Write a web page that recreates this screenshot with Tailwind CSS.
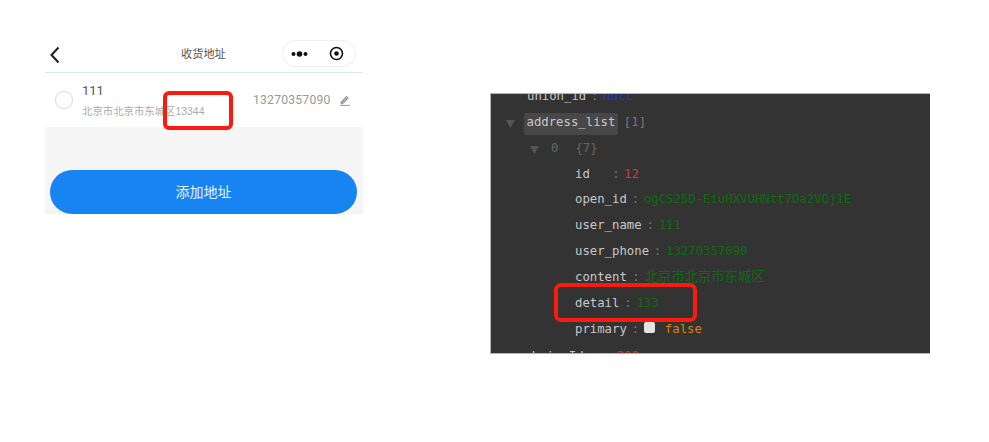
<!DOCTYPE html>
<html>
<head>
<meta charset="utf-8">
<script src="https://cdn.jsdelivr.net/npm/@tailwindcss/browser@4"></script>
</head>
<body class="bg-white">
<div class="relative w-[989px] h-[442px] overflow-hidden bg-white font-['Liberation_Sans','Noto_Sans_CJK_SC',sans-serif]">
  <div class="flex items-start">
    <!-- phone -->
    <section class="ml-[45px] mt-[37px] w-[318px] h-[177px] flex flex-col bg-[#f5f5f5]">
      <header class="h-[36px] shrink-0 bg-white border-b border-[#d5e8f5] flex items-center relative">
        <svg class="ml-[4px] w-[12px] h-[18px]" viewBox="0 0 12 18" fill="none"><path d="M9.5 1.5 L2.5 9 L9.5 16.5" stroke="#222" stroke-width="2.1"/></svg>
        <h1 class="absolute left-[136px] top-[9px] text-[11.2px] leading-[16px] text-[#555]">收货地址</h1>
        <div class="absolute left-[237px] top-[3px] w-[74px] h-[27px] rounded-full border border-[#eeeeee] bg-white flex items-center">
          <svg class="ml-[8px] w-[18px] h-[8px]" viewBox="0 0 18 8"><circle cx="2.5" cy="4" r="2" fill="#111"/><circle cx="8.5" cy="4" r="2.8" fill="#111"/><circle cx="14.5" cy="4" r="2" fill="#111"/></svg>
          <svg class="ml-[20px] w-[15px] h-[15px]" viewBox="0 0 15 15" fill="none"><circle cx="7.5" cy="7.5" r="6" stroke="#111" stroke-width="1.6"/><circle cx="7.5" cy="7.5" r="2.3" fill="#111"/></svg>
        </div>
      </header>
      <div class="h-[54px] shrink-0 bg-white flex items-center">
        <div class="ml-[10px] w-[18px] h-[18px] rounded-full border border-[#d9d9d9] shrink-0"></div>
        <div class="ml-[9px] mt-[3px] w-[171px]">
          <p class="text-[13px] leading-[14px] text-[#555] font-['Roboto','Noto_Sans_CJK_SC',sans-serif]">111</p>
          <p class="mt-[7px] text-[10.4px] leading-[14px] text-[#aaa] whitespace-nowrap">北京市北京市东城区13344</p>
        </div>
        <span class="text-[12.2px] text-[#999] font-['Roboto',sans-serif] tracking-[0.2px] w-[87px]">13270357090</span>
        <svg class="w-[10px] h-[11px]" viewBox="0 0 10 11"><path d="M1 7 L6.5 1.2 L8.4 3 L2.8 8.8 L1 8.8 Z" fill="#aaa" stroke="#888" stroke-width="0.8"/><path d="M0 10.4 H10" stroke="#999" stroke-width="1"/></svg>
      </div>
      <div class="flex-1 flex items-end pl-[5px]">
        <button class="w-[307px] h-[44px] rounded-[22px] bg-[#1784f1] text-white/90 text-[14px]">添加地址</button>
      </div>
    </section>

    <!-- devtools panel -->
    <section class="ml-[127px] mt-[93px] w-[440px] h-[261px] overflow-hidden bg-[#333333] border-l border-t border-b border-[#b5b5b5] font-['DejaVu_Sans_Mono','Noto_Sans_CJK_SC',monospace] text-[12.3px] leading-[26px] text-[#c8c8c8]">
      <div class="-mt-[11px] pl-[36px] flex h-[26px]"><span>union_id</span><span class="w-[17px] text-center text-[#777]">:</span><span class="text-[#1a3fb0]">null</span></div>
      <div class="pl-[15px] flex items-center h-[26px]">
        <svg class="w-[9px] h-[8px] mt-[3px]" viewBox="0 0 9 8"><path d="M0 0 H9 L4.5 8 Z" fill="#555"/></svg>
        <span class="ml-[9px] mt-[3px] px-[2.5px] h-[22px] leading-[18px] rounded-[2px] bg-[#474747]">address_list</span>
        <span class="ml-[6px] text-[#777]">[1]</span>
      </div>
      <div class="pl-[39px] flex items-center h-[26px] text-[#666]">
        <svg class="w-[9px] h-[8px] mt-[3px]" viewBox="0 0 9 8"><path d="M0 0 H9 L4.5 8 Z" fill="#555"/></svg>
        <span class="ml-[12px]">0</span><span class="ml-[17px]">{7}</span>
      </div>
      <div class="pl-[84px] flex h-[25px]"><span class="w-[33px]">id</span><span class="w-[16px] text-center text-[#777]">:</span><span class="text-[#d23a2a]">12</span></div>
      <div class="pl-[84px] flex h-[26px]"><span>open_id</span><span class="w-[17px] text-center text-[#777]">:</span><span class="text-[#0f6b12]">ogCS25D-EiuHXVUHNtt7Da2VQj1E</span></div>
      <div class="pl-[84px] flex h-[26px]"><span>user_name</span><span class="w-[17px] text-center text-[#777]">:</span><span class="text-[#0f6b12]">111</span></div>
      <div class="pl-[84px] flex h-[26px]"><span>user_phone</span><span class="w-[17px] text-center text-[#777]">:</span><span class="text-[#0f6b12]">13270357090</span></div>
      <div class="pl-[84px] flex h-[26px]"><span>content</span><span class="w-[18px] text-center text-[#777]">:</span><span class="text-[13.3px] text-[#0f6b12]">北京市北京市东城区</span></div>
      <div class="pl-[84px] flex h-[26px]"><span>detail</span><span class="w-[17px] text-center text-[#777]">:</span><span class="text-[#0f6b12]">133</span></div>
      <div class="pl-[84px] flex items-center h-[26px]"><span>primary</span><span class="w-[17px] text-center text-[#777]">:</span><span class="w-[11px] h-[11px] rounded-[2px] bg-[#e4e4e4] -mt-[4px]"></span><span class="ml-[10px] text-[#d9830f]">false</span></div>
      <div class="pl-[26px] flex h-[26px] mt-[1px]"><span>webviewId</span><span class="w-[33px] text-center text-[#777]">:</span><span class="text-[#d23a2a]">200</span></div>
    </section>
  </div>

  <!-- red annotations -->
  <div class="absolute left-[163px] top-[91px] w-[70px] h-[39px] rounded-[6px] border-[4px] border-[#fb1a0e]"></div>
  <div class="absolute left-[554px] top-[283px] w-[143px] h-[39px] rounded-[7px] border-[4px] border-[#fb1a0e]"></div>
</div>
</body>
</html>
